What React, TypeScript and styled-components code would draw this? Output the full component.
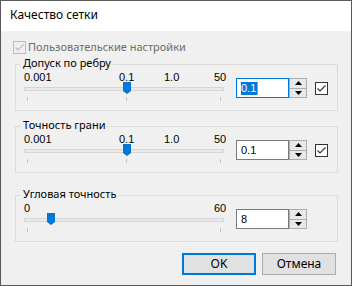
import React from 'react';
import styled, { createGlobalStyle } from 'styled-components';

const GlobalStyle = createGlobalStyle`
  html, body {
    margin: 0;
    padding: 0;
    background: #ffffff;
  }
  body {
    font-family: "Noto Sans", "Liberation Sans", sans-serif;
    font-size: 11px;
    color: #000;
  }
`;

interface Mark {
  label: string;
  left: number;
}

interface Setting {
  title: string;
  marks: Mark[];
  ticks: number[];
  thumb: number;
  value: string;
  focused?: boolean;
  checkbox?: boolean;
  spaceAbove: number;
}

const settings: Setting[] = [
  {
    title: 'Допуск по ребру',
    marks: [
      { label: '0.001', left: 0 },
      { label: '0.1', left: 95 },
      { label: '1.0', left: 140 },
      { label: '50', left: 190 },
    ],
    ticks: [3, 102, 196],
    thumb: 99,
    value: '0.1',
    focused: true,
    checkbox: true,
    spaceAbove: 9,
  },
  {
    title: 'Точность грани',
    marks: [
      { label: '0.001', left: 0 },
      { label: '0.1', left: 95 },
      { label: '1.0', left: 140 },
      { label: '50', left: 190 },
    ],
    ticks: [3, 102, 196],
    thumb: 99,
    value: '0.1',
    checkbox: true,
    spaceAbove: 15,
  },
  {
    title: 'Угловая точность',
    marks: [
      { label: '0', left: 0 },
      { label: '60', left: 190 },
    ],
    ticks: [3, 196],
    thumb: 23,
    value: '8',
    spaceAbove: 22,
  },
];

function CheckMark({ color }: { color: string }) {
  return (
    <svg width="11" height="11" viewBox="0 0 11 11">
      <path d="M1.5 5.5 L4 8 L9.5 2.5" fill="none" stroke={color} strokeWidth="1.1" />
    </svg>
  );
}

function Arrow({ up }: { up?: boolean }) {
  return (
    <svg width="7" height="4" viewBox="0 0 7 4">
      <path d={up ? 'M0 4 L3.5 0 L7 4 Z' : 'M0 0 L7 0 L3.5 4 Z'} fill="#000" />
    </svg>
  );
}

export default function App() {
  return (
    <>
      <GlobalStyle />
      <Window>
        <TitleBar>Качество сетки</TitleBar>
        <Body>
          <CheckRow>
            <CheckBox $disabled>
              <CheckMark color="#bcbcbc" />
            </CheckBox>
            <DisabledText>Пользовательские настройки</DisabledText>
          </CheckRow>

          {settings.map((s) => (
            <GroupBox key={s.title} $spaceAbove={s.spaceAbove}>
              <Legend>{s.title}</Legend>
              <Row>
                <Slider>
                  <Scale>
                    {s.marks.map((m) => (
                      <ScaleLabel key={m.label} style={{ left: m.left }}>
                        {m.label}
                      </ScaleLabel>
                    ))}
                  </Scale>
                  <TrackArea>
                    <Track />
                    <Thumb style={{ left: s.thumb }} />
                    {s.ticks.map((t) => (
                      <Tick key={t} style={{ left: t }} />
                    ))}
                  </TrackArea>
                </Slider>
                <Controls>
                  <Field $focused={s.focused}>
                    {s.focused ? <Selected>{s.value}</Selected> : s.value}
                  </Field>
                  <Spinner>
                    <SpinHalf>
                      <Arrow up />
                    </SpinHalf>
                    <SpinHalf>
                      <Arrow />
                    </SpinHalf>
                  </Spinner>
                  {s.checkbox && (
                    <CheckBox $gap>
                      <CheckMark color="#333" />
                    </CheckBox>
                  )}
                </Controls>
              </Row>
            </GroupBox>
          ))}

          <Footer>
            <Button $default>OK</Button>
            <Button>Отмена</Button>
          </Footer>
        </Body>
      </Window>
    </>
  );
}

const Window = styled.div`
  width: 352px;
  height: 286px;
  box-sizing: border-box;
  border: 1px solid #5b5b5b;
  background: #f0f0f0;
  display: flex;
  flex-direction: column;
`;

const TitleBar = styled.div`
  height: 30px;
  box-sizing: border-box;
  padding: 6px 0 0 9px;
  background: #ffffff;
  font-size: 12px;
  line-height: 16px;
`;

const Body = styled.div`
  flex: 1;
  display: flex;
  flex-direction: column;
  padding: 8px 13px 0 14px;
`;

const CheckRow = styled.div`
  display: flex;
  align-items: center;
  height: 16px;
  margin-left: -2px;
  gap: 2px;
`;

const CheckBox = styled.div<{ $disabled?: boolean; $gap?: boolean }>`
  width: 13px;
  height: 13px;
  box-sizing: border-box;
  border: 1px solid ${(p) => (p.$disabled ? '#bcbcbc' : '#333333')};
  background: ${(p) => (p.$disabled ? 'transparent' : '#ffffff')};
  margin-left: ${(p) => (p.$gap ? '8px' : '0')};
  display: flex;
  align-items: center;
  justify-content: center;
  flex-shrink: 0;
`;

const DisabledText = styled.span`
  color: #6d6d6d;
  line-height: 16px;
  white-space: nowrap;
`;

const GroupBox = styled.div<{ $spaceAbove: number }>`
  position: relative;
  margin-top: ${(p) => p.$spaceAbove}px;
  height: 47px;
  box-sizing: border-box;
  border: 1px solid #dcdcdc;
  padding: 6px 0 0 8px;
`;

const Legend = styled.span`
  position: absolute;
  top: -10px;
  left: 5px;
  padding: 0 2px;
  background: #f0f0f0;
  line-height: 16px;
  white-space: nowrap;
`;

const Row = styled.div`
  display: flex;
  align-items: flex-start;
`;

const Slider = styled.div`
  width: 200px;
  display: flex;
  flex-direction: column;
`;

const Scale = styled.div`
  position: relative;
  height: 13px;
  font-family: "Liberation Sans", Arial, sans-serif;
  font-size: 11px;
  line-height: 13px;
`;

const ScaleLabel = styled.span`
  position: absolute;
  top: 0;
  white-space: nowrap;
`;

const TrackArea = styled.div`
  position: relative;
  margin-top: 3px;
  height: 14px;
`;

const Track = styled.div`
  height: 4px;
  box-sizing: border-box;
  border: 1px solid #d6d6d6;
  background: #e7eaea;
`;

const Thumb = styled.div`
  position: absolute;
  top: -5px;
  width: 8px;
  height: 12px;
  background: #0078d7;
  clip-path: polygon(0 0, 100% 0, 100% 75%, 50% 100%, 0 75%);
`;

const Tick = styled.div`
  position: absolute;
  top: 10px;
  width: 1px;
  height: 4px;
  background: #c4c4c4;
`;

const Controls = styled.div`
  display: flex;
  align-items: center;
  margin: 7px 0 0 12px;
`;

const Field = styled.div<{ $focused?: boolean }>`
  width: 53px;
  height: 20px;
  box-sizing: border-box;
  border: 1px solid ${(p) => (p.$focused ? '#0078d7' : '#7a7a7a')};
  background: #ffffff;
  padding-left: 4px;
  display: flex;
  align-items: center;
  font-family: "Liberation Sans", Arial, sans-serif;
  font-size: 11px;
`;

const Selected = styled.span`
  background: #0078d7;
  color: #ffffff;
  line-height: 13px;
  padding-right: 1px;
  border-right: 1px solid #ff8728;
`;

const Spinner = styled.div`
  width: 18px;
  height: 20px;
  box-sizing: border-box;
  border: 1px solid #adadad;
  background: #e8e8e8;
  display: flex;
  flex-direction: column;
`;

const SpinHalf = styled.div`
  flex: 1;
  display: flex;
  align-items: center;
  justify-content: center;
  & + & {
    border-top: 1px solid #adadad;
  }
`;

const Footer = styled.div`
  display: flex;
  justify-content: flex-end;
  gap: 6px;
  margin-top: 11px;
  padding-right: 2px;
`;

const Button = styled.div<{ $default?: boolean }>`
  width: 74px;
  height: 22px;
  box-sizing: border-box;
  border: ${(p) => (p.$default ? '2px solid #0078d7' : '1px solid #adadad')};
  background: #e1e1e1;
  display: flex;
  align-items: center;
  justify-content: center;
  font-size: 12px;
  line-height: 16px;
`;
